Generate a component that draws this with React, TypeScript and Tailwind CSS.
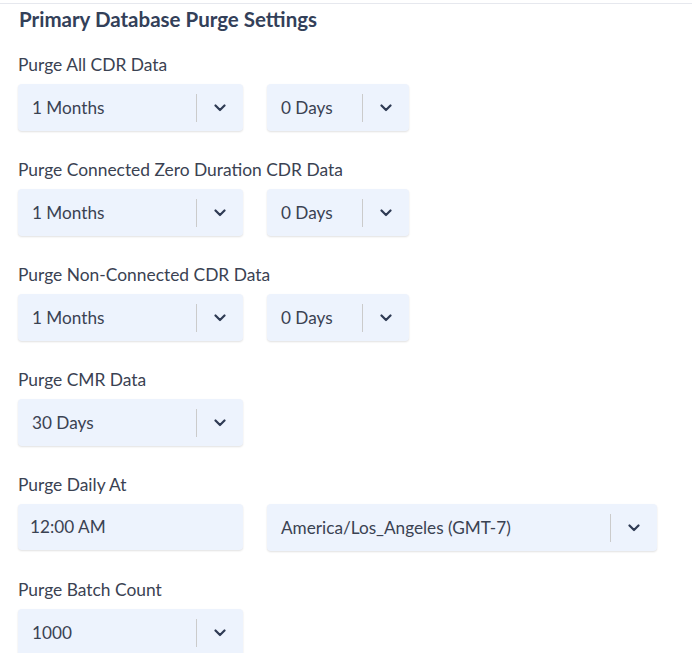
import React from "react";

function Chevron() {
  return (
    <svg width="12" height="8" viewBox="0 0 12 8" fill="none">
      <path d="M1.5 1.5 6 6l4.5-4.5" stroke="#2f3b54" strokeWidth="2.2" strokeLinecap="round" strokeLinejoin="round" />
    </svg>
  );
}

function Select({ value, width }: { value: string; width: string }) {
  return (
    <div className={`${width} h-[47px] flex items-center rounded-[4px] bg-[#edf3fd] shadow-[0_1px_2px_rgba(0,0,0,0.12)]`}>
      <span className="flex-1 pl-[14px] text-[17.2px] text-[#3a4252] truncate">{value}</span>
      <span className="w-px h-[28px] bg-[#cbcbcb]" />
      <span className="w-[46px] flex items-center justify-center">
        <Chevron />
      </span>
    </div>
  );
}

function Field({ label, children }: { label: string; children: React.ReactNode }) {
  return (
    <div className="flex flex-col">
      <div className="h-[26px] leading-[26px] text-[17.4px] text-[#3a4252]">{label}</div>
      <div className="mt-[6px] flex gap-[24px]">{children}</div>
    </div>
  );
}

export default function App() {
  return (
    <div className="w-[692px] h-[653px] overflow-hidden bg-white" style={{ fontFamily: "Lato, 'Noto Sans', sans-serif" }}>
      <div className="h-[3px]" />
      <div className="h-px bg-[#e6e8ee]" />
      <div className="pl-[19px] pr-[34px] flex flex-col">
        <h2 className="mt-[3px] h-[24px] leading-[24px] text-[20.5px] font-bold text-[#334059]">
          Primary Database Purge Settings
        </h2>
        <div className="mt-[21px] flex flex-col gap-[26px] -ml-px">
          <Field label="Purge All CDR Data">
            <Select value="1 Months" width="w-[225px]" />
            <Select value="0 Days" width="w-[142px]" />
          </Field>
          <Field label="Purge Connected Zero Duration CDR Data">
            <Select value="1 Months" width="w-[225px]" />
            <Select value="0 Days" width="w-[142px]" />
          </Field>
          <Field label="Purge Non-Connected CDR Data">
            <Select value="1 Months" width="w-[225px]" />
            <Select value="0 Days" width="w-[142px]" />
          </Field>
          <Field label="Purge CMR Data">
            <Select value="30 Days" width="w-[225px]" />
          </Field>
          <Field label="Purge Daily At">
            <div className="w-[225px] h-[46px] flex items-center rounded-[4px] bg-[#edf3fd] shadow-[0_1px_2px_rgba(0,0,0,0.12)]">
              <span className="pl-[12px] text-[17.2px] text-[#3a4252]">12:00 AM</span>
            </div>
            <Select value="America/Los_Angeles (GMT-7)" width="w-[390px]" />
          </Field>
          <Field label="Purge Batch Count">
            <Select value="1000" width="w-[225px]" />
          </Field>
        </div>
      </div>
    </div>
  );
}
